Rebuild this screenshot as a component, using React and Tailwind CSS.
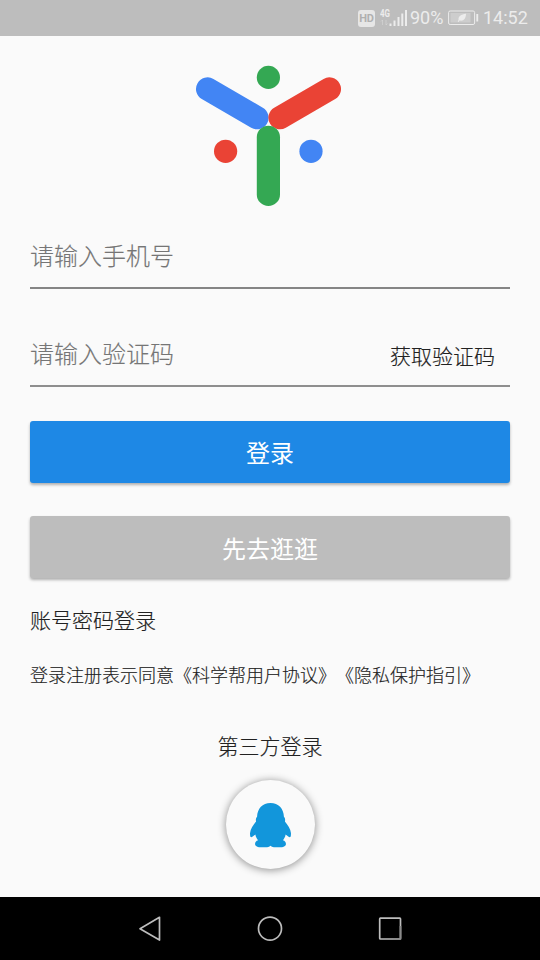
import React, { useState } from "react";

const StatusBar = () => (
  <div className="flex h-9 items-center bg-[#bdbdbd] pr-3 pl-[358px] font-normal text-[#ececec] [-webkit-text-stroke:0]">
    <div className="flex h-[17px] w-[17px] shrink-0 items-center justify-center rounded-[3px] bg-[#e6e6e6]">
      <span className="font-['Roboto'] text-[11px] leading-none font-bold tracking-tight text-[#b0b0b0]">
        HD
      </span>
    </div>
    <svg className="ml-[5px] h-[18px] w-[28px] shrink-0" viewBox="0 0 28 18">
      <text
        x="0"
        y="7.6"
        fontSize="10"
        fontWeight="700"
        fontFamily="Roboto, sans-serif"
        textLength="10"
        lengthAdjust="spacingAndGlyphs"
        fill="currentColor"
      >
        4G
      </text>
      <path
        d="M2.5 11v5M1 12.5 2.5 11M6 11v5M6 16l1.500-1.500"
        stroke="currentColor"
        strokeOpacity="0.35"
        fill="none"
      />
      <path
        d="M9.500 14.500h2V17h-2zM13.500 11.500h2V17h-2zM17.500 8h2v9h-2zM21.300 4.500h2V17h-2zM25 1h2v16h-2z"
        fill="currentColor"
      />
    </svg>
    <span className="ml-[2px] w-[33px] font-['Roboto'] text-[18px] leading-none">
      90%
    </span>
    <svg className="ml-[5px] h-[16px] w-[31px] shrink-0" viewBox="0 0 31 16">
      <rect
        x="0.600"
        y="1"
        width="26"
        height="13.500"
        rx="1.500"
        fill="none"
        stroke="currentColor"
      />
      <rect x="2.500" y="3" width="20" height="9.500" fill="currentColor" opacity="0.35" />
      <rect x="28.300" y="4" width="1.900" height="7.500" fill="currentColor" />
      <path
        d="M10 12c-.4-1 .3-1.500 .6-2C10 6 13 4.600 18 3.800c-.1 4.500-2 7.700-6.500 6.800L10.500 12z"
        fill="currentColor"
      />
    </svg>
    <span className="ml-[4px] font-['Roboto'] text-[18px] leading-none">14:52</span>
  </div>
);

const Logo = () => (
  <svg className="h-[142px] w-[146px]" viewBox="0 0 146 142">
    <g strokeWidth="23.200" strokeLinecap="round">
      <path d="M12.600 24 62 52.700" stroke="#4285f4" />
      <path d="M134.400 24 85 52.700" stroke="#ea4335" />
      <path d="M73.400 72.300V129.400" stroke="#34a853" />
    </g>
    <circle cx="73.400" cy="12.400" r="11.600" fill="#34a853" />
    <circle cx="30.600" cy="86.300" r="11.600" fill="#ea4335" />
    <circle cx="116" cy="86.300" r="11.600" fill="#4285f4" />
  </svg>
);

const QQIcon = () => (
  <svg className="mt-px h-[45px] w-[41px]" viewBox="0 0 122 134" fill="#1296db">
    <path d="M61 0C37 0 22 17 21 41c-4 5-4 9-3 14C10 65 1 77 0 90c0 9 1 12 4 12 4 0 8-6 12-8 1 7 4 12 8 17-6 2-9 6-9 11 0 7 8 10 21 10 12 0 20 0 25-5 5 5 13 5 25 5 13 0 21-3 21-10 0-5-3-9-9-11 4-5 7-10 8-17 4 2 8 8 12 8 3 0 4-3 4-12-1-13-10-25-18-35 1-5 1-9-3-14C100 17 85 0 61 0z" />
  </svg>
);

const NavBar = () => (
  <div className="h-[63px] bg-black">
    <svg
      className="h-full w-full"
      viewBox="0 0 540 63"
      fill="none"
      stroke="#bdbdbd"
      strokeWidth="1.700"
      strokeLinejoin="round"
    >
      <path d="M159.500 20.300v22.800L140 31.700z" />
      <circle cx="270" cy="31.600" r="11.500" />
      <rect x="379.700" y="21.200" width="20.800" height="20.800" rx="0.700" />
      <path d="M393.500 42h7V29" stroke="#8a8a8a" />
    </svg>
  </div>
);

const inputClass =
  "min-w-0 flex-1 bg-transparent text-[24px] leading-9 outline-none placeholder:text-[#757575]";

const App = () => {
  const [phone, setPhone] = useState("");
  const [code, setCode] = useState("");

  return (
    <div className="flex h-[960px] w-[540px] flex-col overflow-hidden bg-[#fafafa] font-['Noto_Sans_CJK_SC',sans-serif] font-light text-[#212121] [-webkit-text-stroke:0.15px]">
      <StatusBar />

      <main className="flex flex-1 flex-col px-[30px]">
        <div className="mt-[29px] ml-[165px]">
          <Logo />
        </div>

        {/* Phone number */}
        <div className="mt-[30px] flex h-[52px] items-start border-b-2 border-[#858585]">
          <input
            className={inputClass}
            placeholder="请输入手机号"
            value={phone}
            onChange={(e) => setPhone(e.target.value)}
          />
        </div>

        {/* Verification code */}
        <div className="mt-[46px] flex h-[52px] items-start border-b-2 border-[#8e8e8e]">
          <input
            className={inputClass}
            placeholder="请输入验证码"
            value={code}
            onChange={(e) => setCode(e.target.value)}
          />
          <button className="mt-[2px] mr-[15px] text-[21px] leading-9">
            获取验证码
          </button>
        </div>

        <button className="mt-[34px] h-[62px] shrink-0 rounded-[3px] bg-[#1e88e5] text-[24px] font-normal text-white shadow-[0_2px_3px_rgba(0,0,0,0.3)] [-webkit-text-stroke:0]">
          登录
        </button>
        <button className="mt-[33px] h-[62px] shrink-0 rounded-[3px] bg-[#bdbdbd] pt-px text-[24px] font-normal text-white shadow-[0_2px_3px_rgba(0,0,0,0.3)] [-webkit-text-stroke:0]">
          先去逛逛
        </button>

        <button className="mt-[26px] self-start text-[21px] leading-[30px]">
          账号密码登录
        </button>
        <p className="mt-[27px] text-[18px] leading-[26px] whitespace-nowrap [text-spacing-trim:space-all]">
          登录注册表示同意《科学帮用户协议》《隐私保护指引》
        </p>

        {/* Third-party login */}
        <div className="mt-[43px] flex flex-col items-center">
          <span className="text-[21px] leading-[30px]">第三方登录</span>
          <button className="mt-[20px] flex h-[89px] w-[89px] items-center justify-center rounded-full bg-[#fafafa] shadow-[0_1px_9px_rgba(0,0,0,0.45)]">
            <QQIcon />
          </button>
        </div>
      </main>

      <NavBar />
    </div>
  );
};

export default App;
